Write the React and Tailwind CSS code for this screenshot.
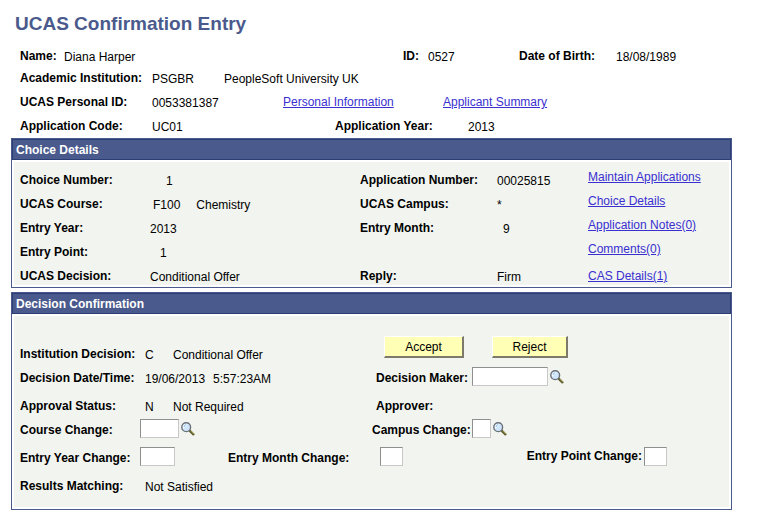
function Label({ htmlFor, className = '', children }) {
  const styles = `font-bold leading-[18px] whitespace-nowrap ${className}`;

  if (htmlFor) {
    return <label htmlFor={htmlFor} className={styles}>{children}</label>;
  }
  return <span className={styles}>{children}</span>;
}

function Value({ className = '', children }) {
  return <span className={`pt-0.5 leading-4 whitespace-nowrap ${className}`}>{children}</span>;
}

function Link({ className = '', children }) {
  return (
    <a href="#" className={`justify-self-start leading-[18px] whitespace-nowrap text-[#3a2fcf] underline ${className}`}>
      {children}
    </a>
  );
}

function Field({ id, className }) {
  return (
    <input
      id={id}
      type="text"
      className={`h-[19px] rounded-none border border-t-[#8f8f8f] border-r-[#c8c8c8] border-b-[#c8c8c8] border-l-[#8f8f8f] bg-white px-0.5 ${className}`}
    />
  );
}

function LookupButton({ label }) {
  return (
    <button type="button" aria-label={label} className="ml-0.5 h-[19px] w-3.5">
      <svg viewBox="0 0 14 14" className="h-3.5 w-3.5">
        <path d="M8.4 8.4 L13 13" stroke="#5c5a28" strokeWidth="2.4" />
        <path d="M9.6 8.8 L13.2 12.4" stroke="#a9a35a" strokeWidth="1" />
        <circle cx="5.2" cy="5.2" r="4.4" fill="#cfe6fd" stroke="#6b6f78" strokeWidth="1.4" />
        <path d="M2.2 6.8 A3.4 3.4 0 0 1 6.8 2.2 Z" fill="#ffffff" />
        <path d="M3 5 A2.6 2.6 0 0 1 5.4 2.6" fill="none" stroke="#7db6f0" strokeWidth="1" />
      </svg>
    </button>
  );
}

function ActionButton({ className, children }) {
  return (
    <button
      type="button"
      className={`h-[22px] border-t border-r-2 border-b-2 border-l border-t-white border-r-[#7d7a6c] border-b-[#7d7a6c] border-l-white bg-[#ffffb5] leading-4 ${className}`}
    >
      {children}
    </button>
  );
}

function Panel({ title, children }) {
  return (
    <section className="border border-[#4a5a8c] bg-white">
      <h2 className="h-[21px] border border-[#2c3f75] bg-[#4a5a8c] px-[3px] leading-5 font-bold text-white">
        {title}
      </h2>
      <div className="p-0.5">
        <div className="bg-[#f1f4ef] pl-1.5">{children}</div>
      </div>
    </section>
  );
}

function StudentHeader() {
  return (
    <div className="flex flex-col pl-[9px]">
      <div className="grid grid-cols-[44px_339px_25px_91px_97px_1fr] pb-1">
        <Label>Name:</Label>
        <Value>Diana Harper</Value>
        <Label>ID:</Label>
        <Value>0527</Value>
        <Label>Date of Birth:</Label>
        <Value>18/08/1989</Value>
      </div>
      <div className="grid grid-cols-[132px_72px_1fr] pb-1.5">
        <Label>Academic Institution:</Label>
        <Value>PSGBR</Value>
        <Value>PeopleSoft University UK</Value>
      </div>
      <div className="grid grid-cols-[132px_131px_160px_1fr] pb-1.5">
        <Label>UCAS Personal ID:</Label>
        <Value>0053381387</Value>
        <Link>Personal Information</Link>
        <Link>Applicant Summary</Link>
      </div>
      <div className="grid grid-cols-[132px_183px_133px_1fr]">
        <Label>Application Code:</Label>
        <Value>UC01</Value>
        <Label>Application Year:</Label>
        <Value>2013</Value>
      </div>
    </div>
  );
}

function ChoiceDetails() {
  return (
    <Panel title="Choice Details">
      <div className="flex">
        <div className="grid grid-cols-[130px_210px_137px_91px] gap-y-1.5 pt-[9px]">
          <Label>Choice Number:</Label>
          <Value className="pl-4">1</Value>
          <Label>Application Number:</Label>
          <Value>00025815</Value>

          <Label>UCAS Course:</Label>
          <Value className="flex gap-4 pl-[3px]">
            <span>F100</span>
            <span>Chemistry</span>
          </Value>
          <Label>UCAS Campus:</Label>
          <Value>*</Value>

          <Label>Entry Year:</Label>
          <Value>2013</Value>
          <Label>Entry Month:</Label>
          <Value className="pl-1.5">9</Value>

          <Label>Entry Point:</Label>
          <Value className="col-span-3 pl-2.5">1</Value>

          <Label>UCAS Decision:</Label>
          <Value>Conditional Offer</Value>
          <Label>Reply:</Label>
          <Value>Firm</Value>
        </div>
        <nav className="flex flex-col items-start gap-1.5 pt-1.5">
          <Link>Maintain Applications</Link>
          <Link>Choice Details</Link>
          <Link>Application Notes(0)</Link>
          <Link>Comments(0)</Link>
          <Link className="mt-[3px]">CAS Details(1)</Link>
        </nav>
      </div>
    </Panel>
  );
}

function DecisionConfirmation() {
  return (
    <Panel title="Decision Confirmation">
      <div className="flex flex-col pt-5 pb-3">
        <div className="grid h-[27px] grid-cols-[125px_28px_211px_108px_1fr] items-end">
          <Label>Institution Decision:</Label>
          <Value>C</Value>
          <Value>Conditional Offer</Value>
          <ActionButton className="w-20 self-start">Accept</ActionButton>
          <ActionButton className="w-[76px] self-start">Reject</ActionButton>
        </div>
        <div className="mt-1 grid h-5 grid-cols-[125px_231px_96px_1fr] items-end">
          <Label>Decision Date/Time:</Label>
          <Value className="flex gap-2">
            <span>19/06/2013</span>
            <span>5:57:23AM</span>
          </Value>
          <Label htmlFor="decision-maker">Decision Maker:</Label>
          <div className="flex self-start">
            <Field id="decision-maker" className="w-[76px]" />
            <LookupButton label="Look up Decision Maker" />
          </div>
        </div>
        <div className="mt-2.5 grid grid-cols-[125px_28px_203px_1fr]">
          <Label>Approval Status:</Label>
          <Value>N</Value>
          <Value>Not Required</Value>
          <Label>Approver:</Label>
        </div>
        <div className="mt-1 grid h-5 grid-cols-[120px_232px_100px_1fr] items-end">
          <Label htmlFor="course-change">Course Change:</Label>
          <div className="flex self-start">
            <Field id="course-change" className="w-[39px]" />
            <LookupButton label="Look up Course Change" />
          </div>
          <Label htmlFor="campus-change">Campus Change:</Label>
          <div className="flex self-start">
            <Field id="campus-change" className="w-[19px]" />
            <LookupButton label="Look up Campus Change" />
          </div>
        </div>
        <div className="mt-2 grid h-5 grid-cols-[120px_88px_152px_264px_1fr] items-end">
          <Label htmlFor="entry-year-change">Entry Year Change:</Label>
          <Field id="entry-year-change" className="w-[35px] self-start" />
          <Label htmlFor="entry-month-change">Entry Month Change:</Label>
          <div className="flex justify-between self-start">
            <Field id="entry-month-change" className="w-[23px]" />
            <Label htmlFor="entry-point-change" className="pr-0.5">Entry Point Change:</Label>
          </div>
          <Field id="entry-point-change" className="w-[23px] self-start" />
        </div>
        <div className="mt-2.5 grid grid-cols-[125px_1fr]">
          <Label>Results Matching:</Label>
          <Value>Not Satisfied</Value>
        </div>
      </div>
    </Panel>
  );
}

function App() {
  return (
    <main className="min-h-screen bg-white pt-3 pr-[26px] pl-[11px] font-['Liberation_Sans',Arial,sans-serif] text-xs text-black">
      <h1 className="pb-[11px] pl-1 text-[19px] leading-6 font-bold text-[#4a5a8c]">
        UCAS Confirmation Entry
      </h1>
      <StudentHeader />
      <div className="mt-[3px] flex flex-col gap-1">
        <ChoiceDetails />
        <DecisionConfirmation />
      </div>
    </main>
  );
}

export default App;
